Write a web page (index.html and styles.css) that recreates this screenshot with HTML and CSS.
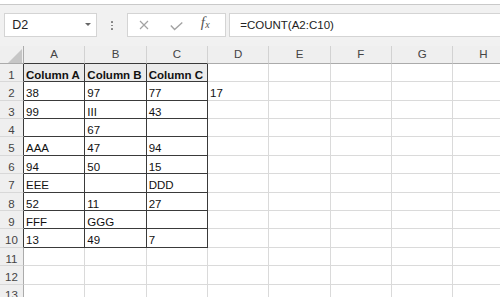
FILE: index.html
```html
<!DOCTYPE html>
<html>
<head>
<meta charset="utf-8">
<link rel="stylesheet" href="styles.css">
</head>
<body>
<div class="titlebar"></div>
<div class="toolbar">
  <div class="namebox"><span>D2</span><span class="caret"></span></div>
  <div class="dots"><span class="dot"></span><span class="dot"></span><span class="dot"></span></div>
  <div class="fxbox">
    <span class="ico-x"><svg width="10" height="10" viewBox="0 0 10 10"><path d="M1 1L9 9M9 1L1 9" stroke="#a3a3a3" stroke-width="1.2" fill="none"/></svg></span>
    <span class="ico-check"><svg width="13" height="9" viewBox="0 0 13 9"><path d="M0.8 3.6L4.6 7.6L12.3 0.6" stroke="#a3a3a3" stroke-width="1.4" fill="none"/></svg></span>
    <span class="ico-fx"><i>f</i><sub>x</sub></span>
  </div>
  <div class="formula">=COUNT(A2:C10)</div>
</div>
<div class="sheet">
  <div class="c corner"><svg width="14" height="14" viewBox="0 0 14 14"><path d="M0 14L14 14L14 0Z" fill="#c6c6c6"/></svg></div>
  <div class="c ch tb">A</div><div class="c ch tb">B</div><div class="c ch tb">C</div><div class="c ch">D</div><div class="c ch">E</div><div class="c ch">F</div><div class="c ch">G</div><div class="c ch">H</div>

  <div class="c rh tl">1</div><div class="c t hd">Column A</div><div class="c t hd">Column B</div><div class="c t hd">Column C</div><div class="c"></div><div class="c"></div><div class="c"></div><div class="c"></div><div class="c"></div>
  <div class="c rh tl">2</div><div class="c t">38</div><div class="c t">97</div><div class="c t">77</div><div class="c">17</div><div class="c"></div><div class="c"></div><div class="c"></div><div class="c"></div>
  <div class="c rh tl">3</div><div class="c t">99</div><div class="c t">III</div><div class="c t">43</div><div class="c"></div><div class="c"></div><div class="c"></div><div class="c"></div><div class="c"></div>
  <div class="c rh tl">4</div><div class="c t"></div><div class="c t">67</div><div class="c t"></div><div class="c"></div><div class="c"></div><div class="c"></div><div class="c"></div><div class="c"></div>
  <div class="c rh tl">5</div><div class="c t">AAA</div><div class="c t">47</div><div class="c t">94</div><div class="c"></div><div class="c"></div><div class="c"></div><div class="c"></div><div class="c"></div>
  <div class="c rh tl">6</div><div class="c t">94</div><div class="c t">50</div><div class="c t">15</div><div class="c"></div><div class="c"></div><div class="c"></div><div class="c"></div><div class="c"></div>
  <div class="c rh tl">7</div><div class="c t">EEE</div><div class="c t"></div><div class="c t">DDD</div><div class="c"></div><div class="c"></div><div class="c"></div><div class="c"></div><div class="c"></div>
  <div class="c rh tl">8</div><div class="c t">52</div><div class="c t">11</div><div class="c t">27</div><div class="c"></div><div class="c"></div><div class="c"></div><div class="c"></div><div class="c"></div>
  <div class="c rh tl">9</div><div class="c t">FFF</div><div class="c t">GGG</div><div class="c t"></div><div class="c"></div><div class="c"></div><div class="c"></div><div class="c"></div><div class="c"></div>
  <div class="c rh tl">10</div><div class="c t">13</div><div class="c t">49</div><div class="c t">7</div><div class="c"></div><div class="c"></div><div class="c"></div><div class="c"></div><div class="c"></div>
  <div class="c rh">11</div><div class="c"></div><div class="c"></div><div class="c"></div><div class="c"></div><div class="c"></div><div class="c"></div><div class="c"></div><div class="c"></div>
  <div class="c rh">12</div><div class="c"></div><div class="c"></div><div class="c"></div><div class="c"></div><div class="c"></div><div class="c"></div><div class="c"></div><div class="c"></div>
  <div class="c rh">13</div><div class="c"></div><div class="c"></div><div class="c"></div><div class="c"></div><div class="c"></div><div class="c"></div><div class="c"></div><div class="c"></div>
</div>
</body>
</html>
```

FILE: styles.css
```css
* { box-sizing: border-box; margin: 0; padding: 0; }
html, body { width: 500px; height: 297px; overflow: hidden; background: #fff; }
body { font-family: "Liberation Sans", Arial, sans-serif; font-size: 11.5px; color: #111; }

.titlebar { height: 5px; background: #fff; border-bottom: 1px solid #c9c9c9; }

.toolbar { height: 40.5px; background: #f1f1f1; display: flex; align-items: flex-start; padding: 8.3px 0 0 4.3px; }
.namebox { width: 92.7px; height: 23.4px; flex: none; background: #fff; border: 1px solid #d4d4d4; display: flex; align-items: center; justify-content: space-between; padding: 0 5px 0 7px; color: #222; font-size: 12.5px; }
.caret { width: 0; height: 0; border-left: 3px solid transparent; border-right: 3px solid transparent; border-top: 3px solid #666; }
.dots { width: 29.7px; flex: none; display: flex; flex-direction: column; align-items: center; gap: 1.6px; padding-top: 8px; }
.dot { width: 1.7px; height: 1.7px; background: #7a7a7a; border-radius: 50%; }

.fxbox { width: 99.3px; height: 23.4px; flex: none; background: #fff; border: 1px solid #d4d4d4; display: flex; align-items: center; padding-left: 10px; }
.ico-x { display: flex; width: 12px; justify-content: center; margin-top: 1px; }
.ico-check { display: flex; width: 13px; margin-left: 20px; margin-top: 3px; }
.ico-fx { margin-left: 18px; font-family: "Liberation Serif", "Times New Roman", serif; color: #555; font-size: 15px; line-height: 15px; margin-top: -2px; }
.ico-fx i { font-style: italic; }
.ico-fx sub { font-size: 10px; font-style: italic; vertical-align: -1px; margin-left: 0.5px; }

.formula { flex: 1; margin-left: 3.3px; height: 23.4px; background: #fff; border: 1px solid #d4d4d4; border-right: none; padding-left: 10px; display: flex; align-items: center; color: #222; white-space: nowrap; }

.sheet { display: grid; grid-template-columns: 24px repeat(8, 61.33px); grid-auto-rows: 18.4px; }
.c { border-right: 1px solid #dadada; border-bottom: 1px solid #dadada; padding: 0 2px 0.5px; display: flex; align-items: flex-end; line-height: 12px; white-space: nowrap; color: #111; }
.ch { background: #efefef; border-right-color: #d2d2d2; border-bottom-color: #ababab; justify-content: center; align-items: center; line-height: 17px; color: #444; padding: 1px 0 0; }
.rh { background: #efefef; border-right-color: #ababab; border-bottom-color: #d8d8d8; justify-content: center; color: #444; padding: 0 0 0.5px; }
.corner { background: #efefef; border-right-color: #ababab; border-bottom-color: #ababab; justify-content: flex-end; align-items: flex-end; padding: 0 1px 0 0; }
.t { border-right-color: #3a3a3a; border-bottom-color: #3a3a3a; }
.tb { border-bottom-color: #3a3a3a; }
.tl { border-right-color: #3a3a3a; }
.hd { background: #ebebeb; font-weight: bold; }
```
